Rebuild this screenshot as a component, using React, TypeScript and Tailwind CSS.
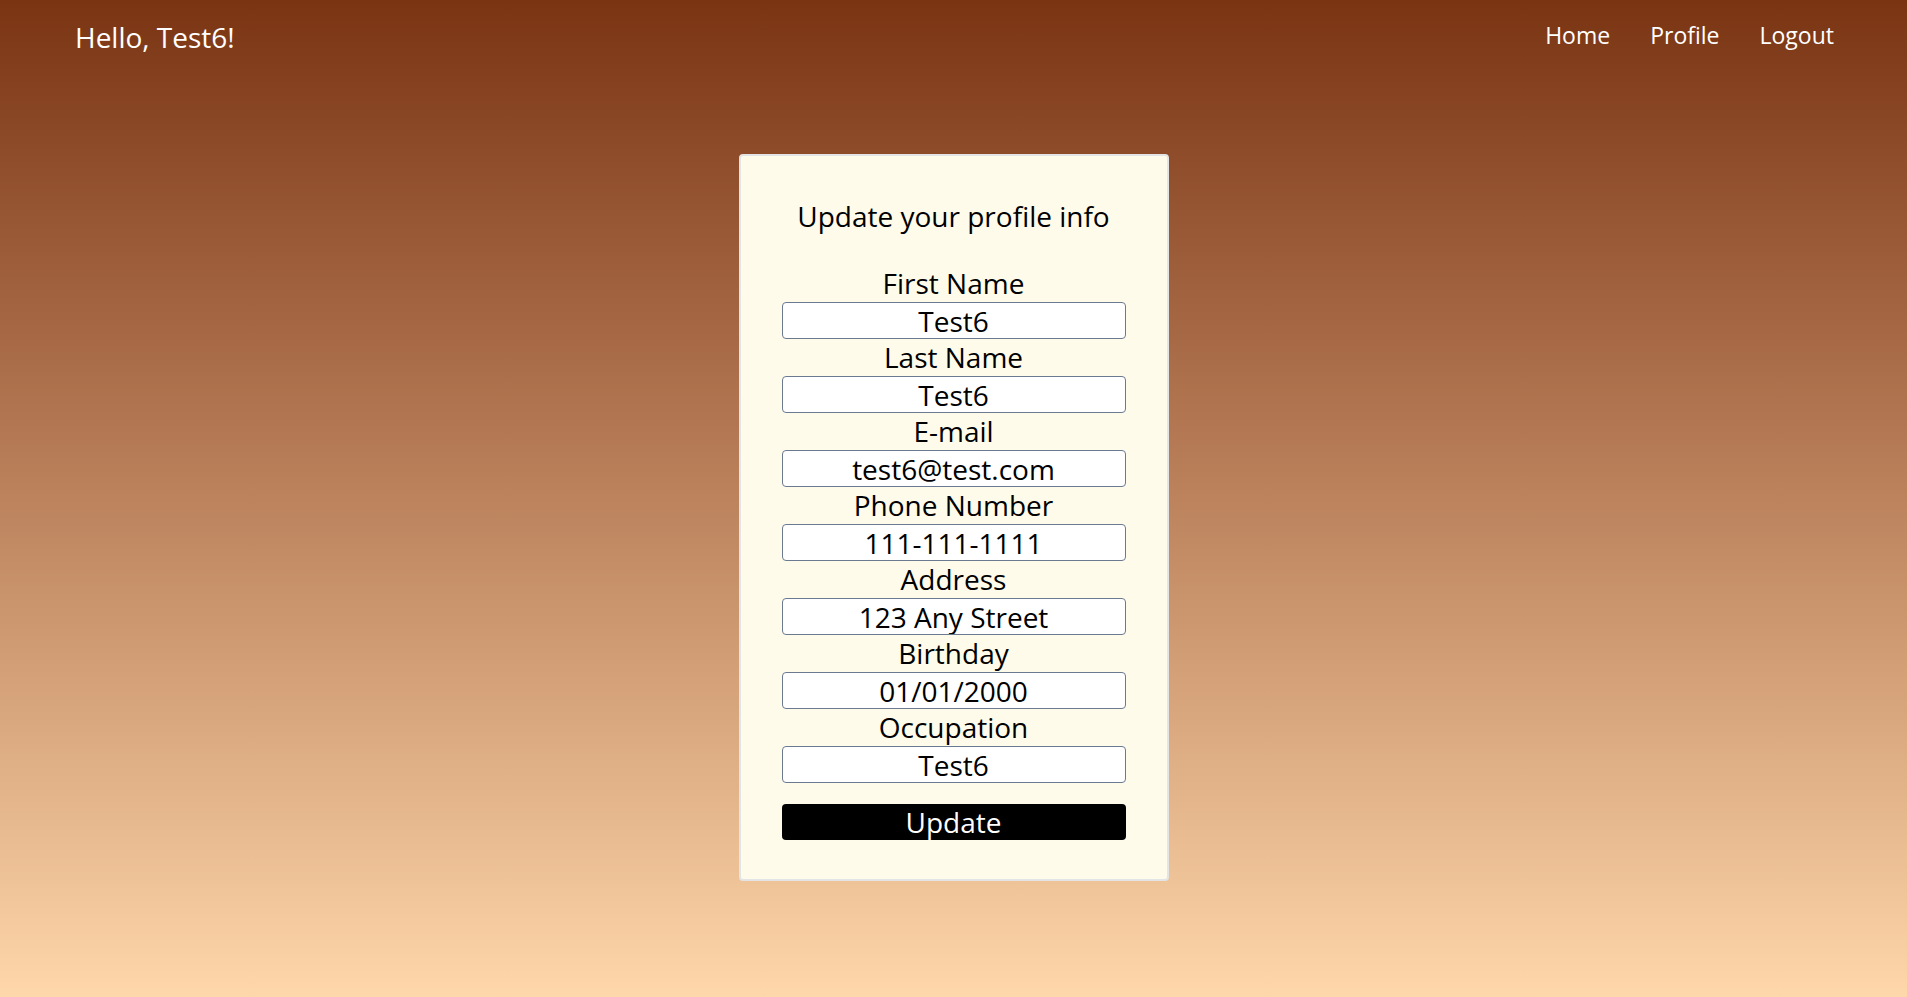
import React from "react";

const fields: [string, string][] = [
  ["First Name", "Test6"],
  ["Last Name", "Test6"],
  ["E-mail", "test6@test.com"],
  ["Phone Number", "111-111-1111"],
  ["Address", "123 Any Street"],
  ["Birthday", "01/01/2000"],
  ["Occupation", "Test6"],
];

export default function App() {
  return (
    <div
      className="min-h-[997px] w-full bg-gradient-to-b from-[#7a3412] to-[#fed7aa] text-black"
      style={{ fontFamily: '"Open Sans", "Noto Sans", sans-serif' }}
    >
      <header className="flex h-[74px] items-center justify-between pl-[75px] pr-[73px] text-white">
        <div className="text-[28px] leading-[37px]">Hello, Test6!</div>
        <nav className="-mt-[4px] flex items-center gap-[40px] text-[23px] leading-[30px]">
          <a href="#">Home</a>
          <a href="#">Profile</a>
          <a href="#">Logout</a>
        </nav>
      </header>
      <main className="flex justify-center pt-[80px]">
        <form
          className="flex w-[430px] flex-col rounded-[4px] border-2 border-[#e3e4e6] bg-[#fffbeb] px-[41px] pb-[39px] pt-[42px]"
          onSubmit={(e) => e.preventDefault()}
        >
          <h2 className="mb-[30px] text-center text-[28px] leading-[37px]">Update your profile info</h2>
          {fields.map(([label, value]) => (
            <div key={label} className="flex flex-col">
              <label className="text-center text-[28px] leading-[37px]">{label}</label>
              <input
                readOnly
                value={value}
                className="h-[37px] w-full rounded-[4px] border border-[#6b7a90] bg-white text-center text-[28px] leading-[35px] outline-none"
              />
            </div>
          ))}
          <button
            type="submit"
            className="mt-[21px] h-[36px] w-full rounded-[4px] bg-black text-center text-[28px] leading-[36px] text-white"
          >
            Update
          </button>
        </form>
      </main>
    </div>
  );
}
